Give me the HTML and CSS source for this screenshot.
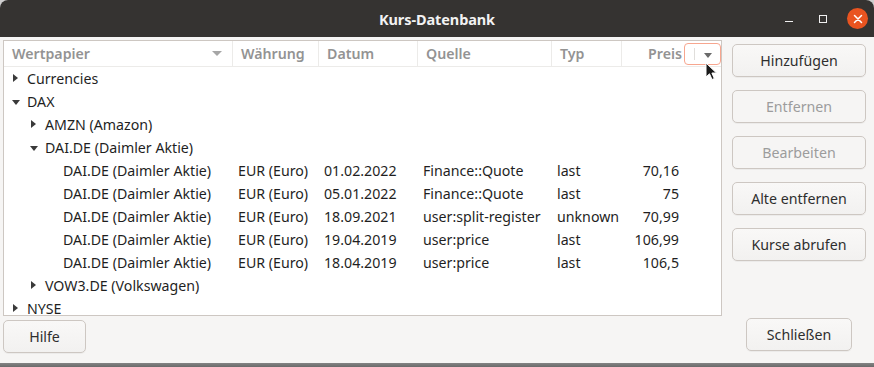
FILE: index.html
```html
<!DOCTYPE html>
<html lang="de">
<head>
<meta charset="utf-8">
<title>Kurs-Datenbank</title>
<link rel="stylesheet" href="styles.css">
</head>
<body>
<div class="window">
  <header class="titlebar">
    <span class="title">Kurs-Datenbank</span>
    <div class="controls">
      <span class="ctl min"></span>
      <span class="ctl max"></span>
      <span class="ctl close">
        <svg width="10" height="10" viewBox="0 0 10 10"><path d="M1.5 1.5 L8.5 8.5 M8.5 1.5 L1.5 8.5" stroke="#fff" stroke-width="1.5" stroke-linecap="round"/></svg>
      </span>
    </div>
  </header>
  <main class="content">
    <div class="mainrow">
      <div class="tree">
        <div class="head cols">
          <div class="hcell sortcol"><span>Wertpapier</span><span class="sort"></span></div>
          <div class="hcell">Währung</div>
          <div class="hcell">Datum</div>
          <div class="hcell">Quelle</div>
          <div class="hcell">Typ</div>
          <div class="hcell num">Preis</div>
          <div class="hcell menu"><span class="menusep"></span><span class="menuarrow"></span></div>
        </div>
        <div class="row cols"><div class="cell l0"><span class="exp right"></span>Currencies</div></div>
        <div class="row cols"><div class="cell l0"><span class="exp down"></span>DAX</div></div>
        <div class="row cols"><div class="cell l1"><span class="exp right"></span>AMZN (Amazon)</div></div>
        <div class="row cols"><div class="cell l1"><span class="exp down"></span>DAI.DE (Daimler Aktie)</div></div>
        <div class="row cols"><div class="cell l2">DAI.DE (Daimler Aktie)</div><div class="cell">EUR (Euro)</div><div class="cell">01.02.2022</div><div class="cell">Finance::Quote</div><div class="cell">last</div><div class="cell num">70,16</div></div>
        <div class="row cols"><div class="cell l2">DAI.DE (Daimler Aktie)</div><div class="cell">EUR (Euro)</div><div class="cell">05.01.2022</div><div class="cell">Finance::Quote</div><div class="cell">last</div><div class="cell num">75</div></div>
        <div class="row cols"><div class="cell l2">DAI.DE (Daimler Aktie)</div><div class="cell">EUR (Euro)</div><div class="cell">18.09.2021</div><div class="cell">user:split-register</div><div class="cell">unknown</div><div class="cell num">70,99</div></div>
        <div class="row cols"><div class="cell l2">DAI.DE (Daimler Aktie)</div><div class="cell">EUR (Euro)</div><div class="cell">19.04.2019</div><div class="cell">user:price</div><div class="cell">last</div><div class="cell num">106,99</div></div>
        <div class="row cols"><div class="cell l2">DAI.DE (Daimler Aktie)</div><div class="cell">EUR (Euro)</div><div class="cell">18.04.2019</div><div class="cell">user:price</div><div class="cell">last</div><div class="cell num">106,5</div></div>
        <div class="row cols"><div class="cell l1"><span class="exp right"></span>VOW3.DE (Volkswagen)</div></div>
        <div class="row cols"><div class="cell l0"><span class="exp right"></span>NYSE</div></div>
        <svg class="cursor" width="14" height="20" viewBox="0 0 14 20"><path d="M1 1 L1 15 L4.5 11.8 L7 17.5 L9.3 16.5 L6.9 11 L11.5 11 Z" fill="#1a1a1a" stroke="#ffffff" stroke-width="1"/></svg>
      </div>
      <div class="side">
        <button class="btn">Hinzufügen</button>
        <button class="btn" disabled>Entfernen</button>
        <button class="btn" disabled>Bearbeiten</button>
        <button class="btn">Alte entfernen</button>
        <button class="btn">Kurse abrufen</button>
      </div>
    </div>
    <div class="bottomrow">
      <button class="btn help">Hilfe</button>
      <button class="btn close-btn">Schließen</button>
    </div>
  </main>
</div>
</body>
</html>
```
FILE: styles.css
```css
html, body {
  margin: 0;
  padding: 0;
}
body {
  width: 874px;
  height: 367px;
  font-family: "Noto Sans", "Open Sans", sans-serif;
  font-size: 14.2px;
  color: #1f1f1f;
  overflow: hidden;
  background: linear-gradient(#cfcfcf 0, #cfcfcf 40px, #8a8a8a 362px, #6a6a6a 367px);
}
.window {
  width: 874px;
  height: 363px;
  display: flex;
  flex-direction: column;
  border-radius: 8px 8px 0 0;
  overflow: hidden;
  background: #f6f5f4;
}
.titlebar {
  height: 37px;
  flex: none;
  background: #353331;
  display: flex;
  align-items: center;
  justify-content: center;
  position: relative;
}
.title {
  color: #f2f2f2;
  font-weight: bold;
  font-size: 14.5px;
  letter-spacing: -0.1px;
}
.controls {
  position: absolute;
  right: 6px;
  top: 0;
  height: 37px;
  display: flex;
  align-items: center;
}
.ctl {
  display: inline-block;
}
.min {
  width: 8px;
  height: 1.5px;
  background: #f0f0f0;
  margin-top: 6px;
  margin-right: 26px;
}
.max {
  width: 6px;
  height: 6px;
  border: 1.2px solid #f0f0f0;
  margin-right: 20px;
}
.close {
  width: 21px;
  height: 21px;
  border-radius: 50%;
  background: #e95420;
  display: flex;
  align-items: center;
  justify-content: center;
}
.content {
  flex: 1;
  display: flex;
  flex-direction: column;
  padding: 3px 8px 0 3px;
}
.mainrow {
  display: flex;
  align-items: flex-start;
}
.tree {
  width: 717px;
  height: 274px;
  flex: none;
  border: 1px solid #cdc7c2;
  background: #ffffff;
  overflow: hidden;
  position: relative;
}
.cols {
  display: grid;
  grid-template-columns: 229px 86px 99px 134px 70px 62px 37px;
}
.head {
  height: 26px;
  border-bottom: 1px solid #ecebe9;
  box-sizing: border-box;
  color: #939393;
  font-weight: 600;
}
.hcell {
  border-right: 1px solid #ecebe9;
  padding-left: 8px;
  display: flex;
  align-items: center;
  white-space: nowrap;
}
.hcell.num {
  justify-content: flex-end;
  padding-right: 2px;
  padding-left: 0;
  border-right: none;
}
.sortcol {
  justify-content: space-between;
  padding-right: 10px;
}
.sort {
  width: 0;
  height: 0;
  border-left: 5px solid transparent;
  border-right: 5px solid transparent;
  border-top: 5px solid #a6a6a6;
}
.menu {
  border: 1.5px solid #f7a68f;
  border-radius: 4px;
  margin: 2px 0 1px 0;
  padding: 0;
  position: relative;
}
.menusep {
  position: absolute;
  left: 9px;
  top: 4px;
  bottom: 4px;
  width: 1px;
  background: #e0dedb;
}
.menuarrow {
  position: absolute;
  left: 19px;
  top: 9px;
  width: 0;
  height: 0;
  border-left: 4.5px solid transparent;
  border-right: 4.5px solid transparent;
  border-top: 5px solid #6a6a6a;
}
.row {
  height: 23px;
  align-items: center;
}
.cell {
  padding-left: 5px;
  white-space: nowrap;
  display: flex;
  align-items: center;
  height: 23px;
}
.cell.num {
  justify-content: flex-end;
  padding-right: 5px;
  padding-left: 0;
}
.l0 { padding-left: 23px; position: relative; }
.l1 { padding-left: 41px; position: relative; }
.l2 { padding-left: 59px; }
.exp {
  position: absolute;
  width: 0;
  height: 0;
}
.l0 .exp { left: 8px; }
.l1 .exp { left: 26px; }
.exp.right {
  top: 7px;
  border-top: 4.5px solid transparent;
  border-bottom: 4.5px solid transparent;
  border-left: 5px solid #3a3a3a;
  margin-left: 1px;
}
.exp.down {
  top: 10px;
  border-left: 4.5px solid transparent;
  border-right: 4.5px solid transparent;
  border-top: 5px solid #3a3a3a;
}
.cursor {
  position: absolute;
  left: 701px;
  top: 21px;
}
.side {
  margin-left: 10px;
  padding-top: 4px;
  display: flex;
  flex-direction: column;
  gap: 13px;
  width: 134px;
}
.btn {
  font-family: inherit;
  font-size: 14.2px;
  color: #2e2e2e;
  height: 33px;
  border: 1px solid #cdc7c2;
  border-radius: 5px;
  background: linear-gradient(#f9f8f7, #f2f1f0);
  padding: 0;
  box-shadow: 0 1px 0 rgba(0,0,0,0.04);
}
.btn:disabled {
  color: #9c9c9c;
  background: #f6f5f4;
}
.bottomrow {
  display: flex;
  justify-content: space-between;
  align-items: flex-start;
  padding-right: 14px;
}
.help {
  width: 83px;
  margin-top: 4px;
}
.close-btn {
  width: 106px;
  margin-top: 2px;
}
```
